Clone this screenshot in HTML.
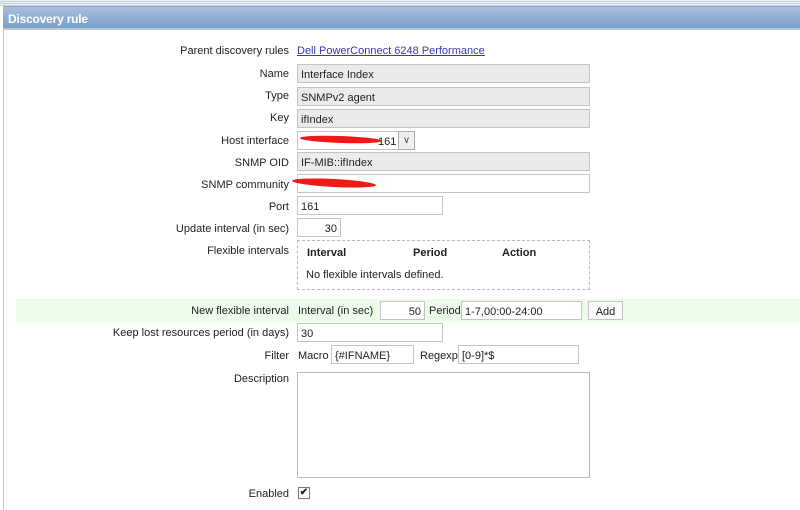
<!DOCTYPE html>
<html><head><meta charset="utf-8"><style>
*{margin:0;padding:0;box-sizing:border-box}
body{width:800px;height:510px;background:#fff;position:relative;overflow:hidden;font-family:"Liberation Sans",sans-serif;font-size:11px;color:#222}
.top{position:absolute;left:0;top:0;width:800px;height:6px;background:repeating-linear-gradient(#e8edf3 0 1px,#c9d3df 1px 2px)}
.hdr{position:absolute;left:3px;top:6px;width:797px;height:24px;background:linear-gradient(#a6bfda,#7a9ecb);border-top:1px solid #8fa6c0;border-bottom:2px solid #b9c7d6;color:#fff;font-weight:bold;font-size:12px;padding:5px 0 0 5px;letter-spacing:-0.2px}
.lb{position:absolute;left:3px;top:30px;width:1px;height:480px;background:#b8cbe0}
.l{position:absolute;right:511px;text-align:right;white-space:nowrap}
.f{position:absolute;border:1px solid #c4c4c4;background:#fff;padding:3px 3px 1px;white-space:nowrap;height:19px;line-height:14px}
.g{background:#ebebeb}
.t{position:absolute;white-space:nowrap}
.red{position:absolute;background:#f01818;border-radius:50%}
</style></head><body>
<div class="top"></div>
<div class="hdr">Discovery rule</div>
<div class="lb"></div>

<div class="l" style="top:45px">Parent discovery rules</div>
<div class="t" style="left:297px;top:45px;color:#3a3aa8;text-decoration:underline">Dell PowerConnect 6248 Performance</div>

<div class="l" style="top:68px">Name</div>
<div class="f g" style="left:297px;top:64px;width:293px">Interface Index</div>
<div class="l" style="top:90px">Type</div>
<div class="f g" style="left:297px;top:87px;width:293px">SNMPv2 agent</div>
<div class="l" style="top:112px">Key</div>
<div class="f g" style="left:297px;top:109px;width:293px">ifIndex</div>

<div class="l" style="top:135px">Host interface</div>
<div class="f" style="left:297px;top:131px;width:118px;padding-left:80px">161</div>
<div style="position:absolute;left:398px;top:131px;width:17px;height:19px;border:1px solid #aaa;background:#f0f0f0;text-align:center;font-size:10px;line-height:17px;color:#555">&#8744;</div>
<div class="red" style="left:300px;top:136px;width:82px;height:7px;transform:rotate(2deg)"></div>

<div class="l" style="top:157px">SNMP OID</div>
<div class="f g" style="left:297px;top:152px;width:293px">IF-MIB::ifIndex</div>
<div class="l" style="top:179px">SNMP community</div>
<div class="f" style="left:297px;top:174px;width:293px"></div>
<div class="red" style="left:292px;top:179px;width:84px;height:8px;transform:rotate(3deg)"></div>

<div class="l" style="top:201px">Port</div>
<div class="f" style="left:297px;top:196px;width:146px">161</div>
<div class="l" style="top:223px">Update interval (in sec)</div>
<div class="f" style="left:297px;top:218px;width:44px;text-align:right">30</div>

<div class="l" style="top:245px">Flexible intervals</div>
<div style="position:absolute;left:297px;top:240px;width:293px;height:50px;border:1px dashed #bbb"></div>
<div class="t" style="left:307px;top:247px;font-weight:bold">Interval</div>
<div class="t" style="left:413px;top:247px;font-weight:bold">Period</div>
<div class="t" style="left:502px;top:247px;font-weight:bold">Action</div>
<div class="t" style="left:306px;top:269px">No flexible intervals defined.</div>

<div style="position:absolute;left:16px;top:299px;width:784px;height:23px;background:#ecfbea"></div>
<div class="l" style="top:305px">New flexible interval</div>
<div class="t" style="left:298px;top:305px">Interval (in sec)</div>
<div class="f" style="left:380px;top:301px;width:45px;text-align:right">50</div>
<div class="t" style="left:429px;top:305px">Period</div>
<div class="f" style="left:461px;top:301px;width:121px">1-7,00:00-24:00</div>
<div class="f" style="left:588px;top:301px;width:35px;text-align:center;background:#fafafa">Add</div>

<div class="l" style="top:327px">Keep lost resources period (in days)</div>
<div class="f" style="left:297px;top:323px;width:146px">30</div>

<div class="l" style="top:350px">Filter</div>
<div class="t" style="left:298px;top:350px">Macro</div>
<div class="f" style="left:331px;top:345px;width:83px">{#IFNAME}</div>
<div class="t" style="left:420px;top:350px">Regexp</div>
<div class="f" style="left:458px;top:345px;width:121px">[0-9]*$</div>

<div class="l" style="top:373px">Description</div>
<div style="position:absolute;left:297px;top:372px;width:293px;height:106px;border:1px solid #bbb"></div>

<div class="l" style="top:488px">Enabled</div>
<div style="position:absolute;left:298px;top:487px;width:12px;height:12px;border:1px solid #777;font-size:10px;line-height:10px;text-align:center;font-weight:bold">&#10004;</div>
</body></html>
